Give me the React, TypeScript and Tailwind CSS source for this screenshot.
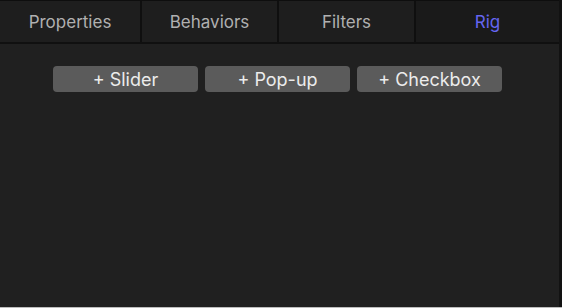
import React from "react";

const tabs = [
  { t: "Properties", w: "w-[140px]" },
  { t: "Behaviors", w: "w-[137px]" },
  { t: "Filters", w: "w-[137px]" },
  { t: "Rig", w: "flex-1" },
];
const buttons = ["+ Slider", "+ Pop-up", "+ Checkbox"];

export default function App() {
  return (
    <div
      className="w-[562px] h-[308px] flex flex-col bg-[#202020] overflow-hidden"
      style={{ fontFamily: "Inter, 'Liberation Sans', sans-serif" }}
    >
      <div className="flex flex-1 min-h-0">
        <div className="flex-1 flex flex-col border-t border-[#0e0e0e]">
          <div className="flex h-[43px] border-b-2 border-[#101010]">
            {tabs.map(({ t, w }, i) => (
              <div
                key={t}
                className={
                  w +
                  " flex items-center justify-center text-[17px] pt-[3px] " +
                  (i > 0 ? "border-l-2 border-[#0f0f0f] " : "") +
                  (t === "Rig"
                    ? "bg-[#1a1a1a] text-[#6565f0]"
                    : "bg-[#1e1e1e] text-[#b0b0b0]")
                }
              >
                {t}
              </div>
            ))}
          </div>
          <div className="flex gap-[7px] pl-[53px] pt-[22px]">
            {buttons.map((b) => (
              <div
                key={b}
                className="w-[145px] h-[26px] rounded-[4px] bg-[#5b5b5b] text-[#ececec] text-[18px] flex items-center justify-center"
              >
                {b}
              </div>
            ))}
          </div>
        </div>
        <div className="w-[3px] bg-[#121212]" />
      </div>
      <div className="h-px bg-[#bdbdbd]" />
    </div>
  );
}
